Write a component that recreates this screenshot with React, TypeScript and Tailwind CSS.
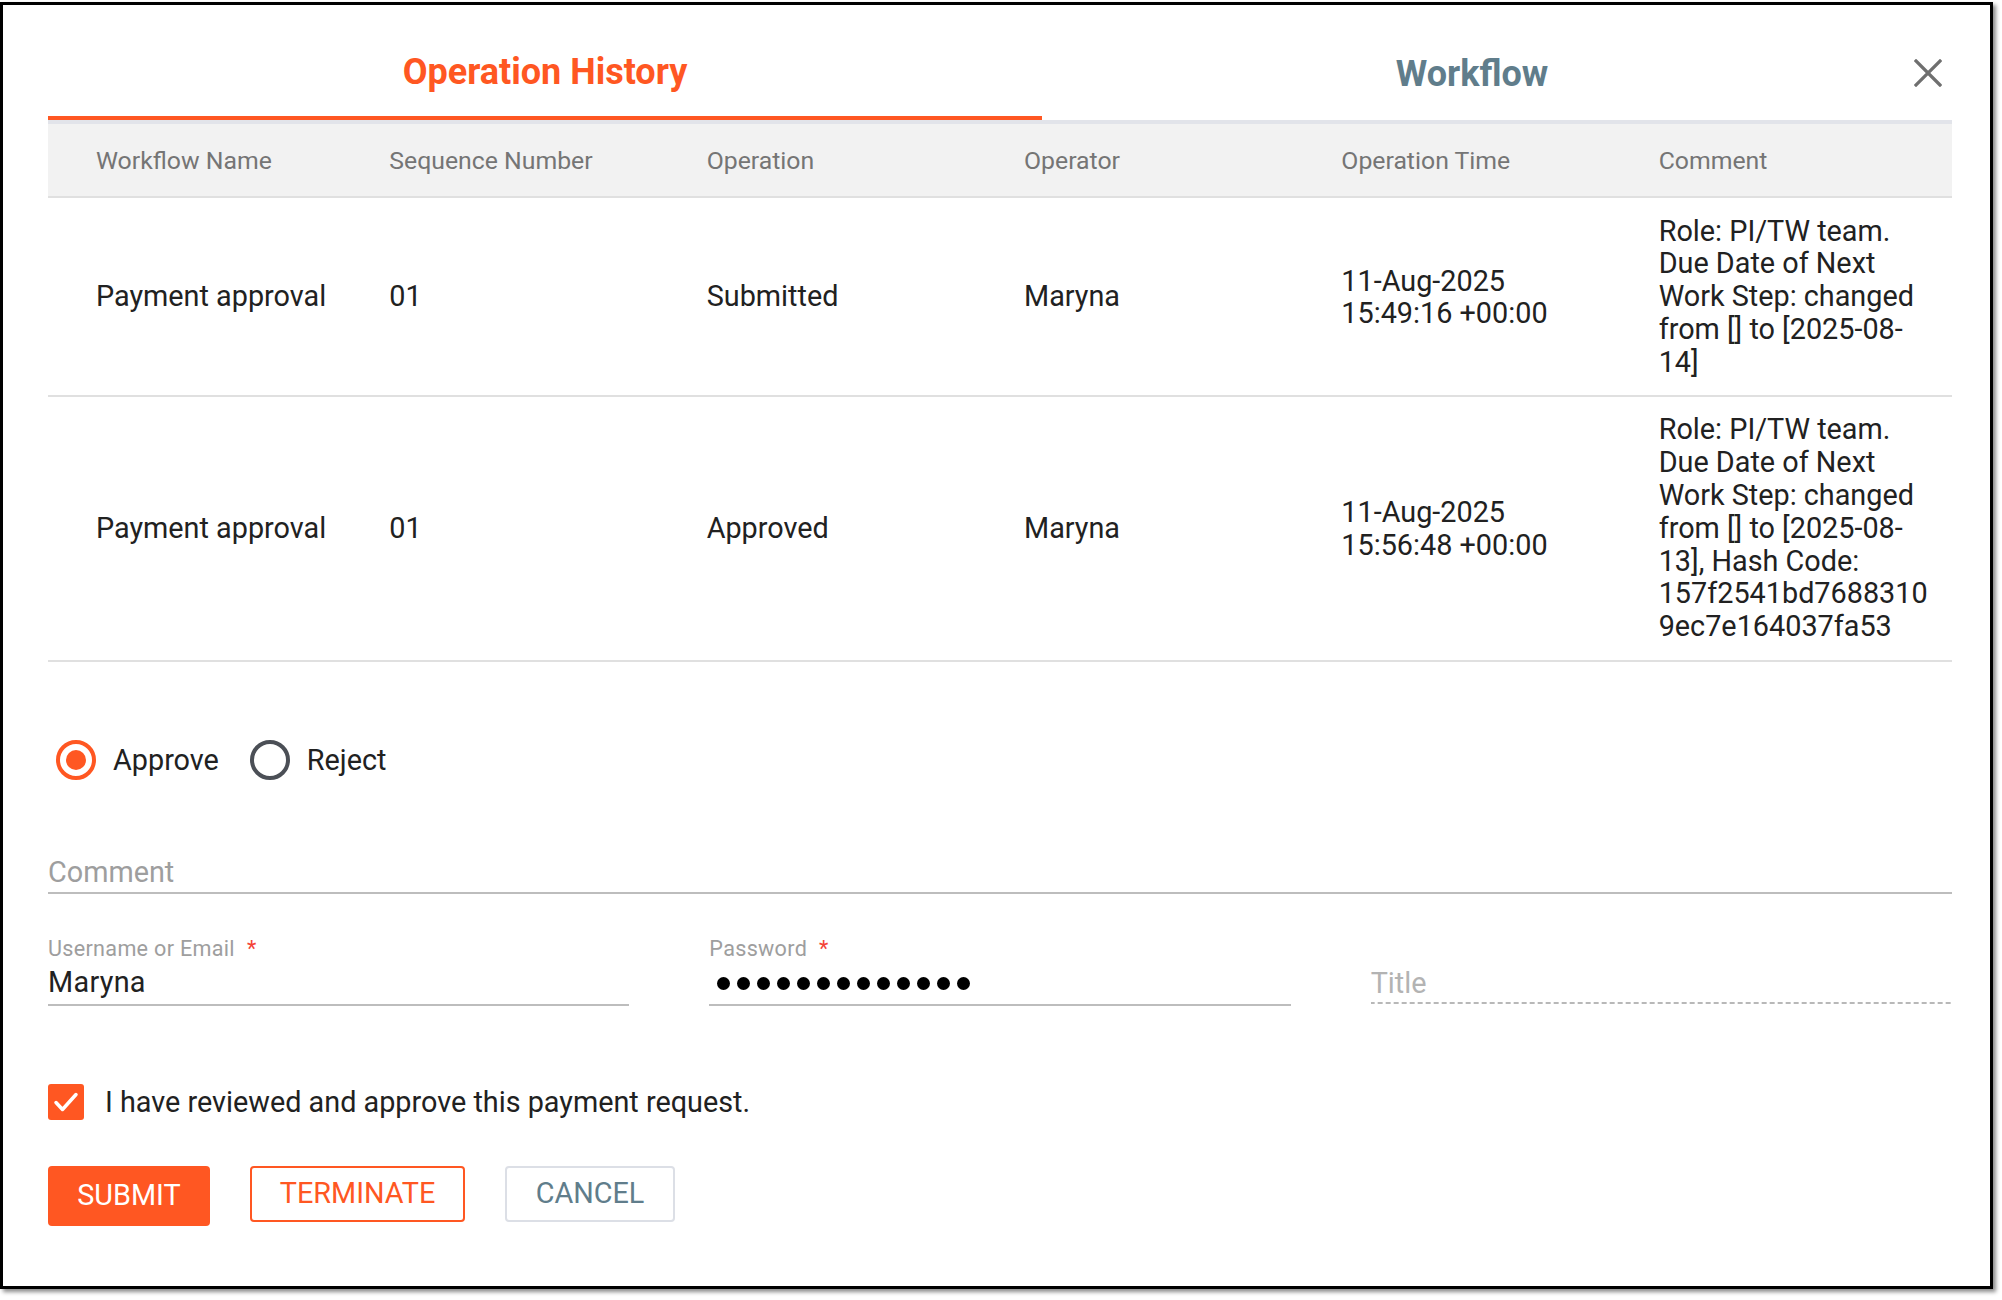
import { useState } from 'react';

const rows = [
  {
    name: 'Payment approval',
    seq: '01',
    op: 'Submitted',
    operator: 'Maryna',
    time: ['11-Aug-2025', '15:49:16 +00:00'],
    comment: 'Role: PI/TW team. Due Date of Next Work Step: changed from [] to [2025-08-14]',
  },
  {
    name: 'Payment approval',
    seq: '01',
    op: 'Approved',
    operator: 'Maryna',
    time: ['11-Aug-2025', '15:56:48 +00:00'],
    comment:
      'Role: PI/TW team. Due Date of Next Work Step: changed from [] to [2025-08-13], Hash Code: 157f2541bd76883109ec7e164037fa53',
  },
];

const headers = ['Workflow Name', 'Sequence Number', 'Operation', 'Operator', 'Operation Time', 'Comment'];

function Radio({ checked, label, onClick }: { checked: boolean; label: string; onClick: () => void }) {
  return (
    <button type="button" onClick={onClick} className="flex items-center">
      <span
        className={
          checked
            ? 'w-[40px] h-[40px] rounded-full border-[4.5px] border-[#ff5722] flex items-center justify-center'
            : 'w-[40px] h-[40px] rounded-full border-[4.5px] border-[#4b4f56] flex items-center justify-center'
        }
      >
        {checked && <span className="w-[20px] h-[20px] rounded-full bg-[#ff5722]" />}
      </span>
      <span className="ml-[17px] text-[28.8px] text-[#212121] leading-[40px]">{label}</span>
    </button>
  );
}

export default function App() {
  const [decision, setDecision] = useState<'approve' | 'reject'>('approve');
  const [agreed, setAgreed] = useState(true);

  return (
    <div className="w-[2002px] h-[1300px] bg-white pt-[2px] font-['Roboto',sans-serif]">
      <div className="w-[1993px] h-[1287px] border-[3px] border-black bg-white shadow-[3px_3px_4px_rgba(0,0,0,0.45)] pl-[45px]">
        <div className="w-[1904px]">
          {/* tabs */}
          <div className="flex h-[119px] border-b-4 border-[#e2e4ea]">
            <div className="w-[994px] h-[115px] pt-[22px] border-b-4 border-[#ff5722] flex items-center justify-center">
              <span className="text-[36px] font-bold text-[#ff5722]">Operation History</span>
            </div>
            <div className="flex-1 h-[115px] pt-[22px] flex items-center justify-center">
              <span className="text-[36px] font-bold text-[#607d8b]">Workflow</span>
            </div>
            <div className="w-[50px] h-[115px] pt-[21px] flex items-center justify-start pl-[12px]">
              <svg width="28" height="28" viewBox="0 0 28 28">
                <path d="M2 2 L26 26 M26 2 L2 26" stroke="#6f6f6f" strokeWidth="3.2" strokeLinecap="square" />
              </svg>
            </div>
          </div>

          {/* table */}
          <div className="grid grid-cols-6 h-[74px] pt-[2px] bg-[#f2f2f2] border-b-2 border-[#e0e0e0] items-center text-[24.8px] text-[#757575]">
            {headers.map((h, i) => (
              <div key={h} className={i === 0 ? 'pl-[48px] pr-6' : 'px-6'}>
                {h}
              </div>
            ))}
          </div>
          {rows.map((r, idx) => (
            <div
              key={idx}
              className="grid grid-cols-6 items-center border-b-2 border-[#e0e0e0] py-[16.5px] text-[28.8px] leading-[32.8px] text-[#212121]"
            >
              <div className="pl-[48px] pr-6">{r.name}</div>
              <div className="px-6">{r.seq}</div>
              <div className="px-6">{r.op}</div>
              <div className="px-6">{r.operator}</div>
              <div className="px-6 pt-[2px]">
                <div>{r.time[0]}</div>
                <div>{r.time[1]}</div>
              </div>
              <div className="pl-6 pr-[18px] break-words">{r.comment}</div>
            </div>
          ))}

          {/* decision */}
          <div className="flex items-center mt-[78px] ml-[8px] h-[40px]">
            <Radio checked={decision === 'approve'} label="Approve" onClick={() => setDecision('approve')} />
            <div className="ml-[31px]">
              <Radio checked={decision === 'reject'} label="Reject" onClick={() => setDecision('reject')} />
            </div>
          </div>

          {/* comment */}
          <div className="mt-[70px] h-[44px] pt-[4px] border-b-2 border-[#bdbdbd] flex items-center text-[28.8px] text-[#9e9e9e]">
            Comment
          </div>

          {/* credentials */}
          <div className="grid grid-cols-3 gap-x-[80px] mt-[44px]">
            <div>
              <div className="h-[24px] flex items-center text-[21.6px] tracking-[0.3px] text-[#9e9e9e]">
                Username or Email
                <span className="ml-[12px] text-[#f44336]">*</span>
              </div>
              <div className="h-[44px] pt-[1px] border-b-2 border-[#bdbdbd] flex items-center text-[28.8px] tracking-[0.3px] text-[#212121]">
                Maryna
              </div>
            </div>
            <div>
              <div className="h-[24px] flex items-center text-[21.6px] tracking-[0.3px] text-[#9e9e9e]">
                Password
                <span className="ml-[12px] text-[#f44336]">*</span>
              </div>
              <div className="h-[44px] pt-[1px] border-b-2 border-[#bdbdbd] flex items-center gap-[7px] pl-[8px]">
                {Array.from({ length: 13 }).map((_, i) => (
                  <span key={i} className="w-[13px] h-[13px] rounded-full bg-black" />
                ))}
              </div>
            </div>
            <div>
              <div className="h-[24px]" />
              <div className="h-[42px] pt-[3px] flex items-center text-[28.8px] text-[#b3b3b3] bg-[linear-gradient(to_right,#b8b8b8_60%,transparent_60%)] bg-[length:8px_2px] bg-repeat-x bg-bottom">
                Title
              </div>
            </div>
          </div>

          {/* confirm */}
          <button type="button" onClick={() => setAgreed(!agreed)} className="flex items-center h-[36px] mt-[78px]">
            <span
              className={
                agreed
                  ? 'w-[36px] h-[36px] rounded-[3px] bg-[#ff5722] flex items-center justify-center'
                  : 'w-[36px] h-[36px] rounded-[3px] border-2 border-[#757575] flex items-center justify-center'
              }
            >
              {agreed && (
                <svg width="36" height="36" viewBox="0 0 36 36">
                  <path d="M8 18.5 L14.5 25.5 L28 10.5" fill="none" stroke="white" strokeWidth="3.5" strokeLinecap="round" strokeLinejoin="round" />
                </svg>
              )}
            </span>
            <span className="ml-[21px] text-[28.8px] leading-[36px] text-[#212121]">
              I have reviewed and approve this payment request.
            </span>
          </button>

          {/* actions */}
          <div className="flex items-start gap-[40px] mt-[46px]">
            <button type="button" className="w-[162px] h-[60px] rounded-[4px] bg-[#ff5722] text-white text-[28.8px] uppercase">
              Submit
            </button>
            <button type="button" className="w-[215px] h-[56px] rounded-[4px] border-2 border-[#ff5722] text-[#ff5722] text-[28.8px] uppercase">
              Terminate
            </button>
            <button type="button" className="w-[170px] h-[56px] rounded-[4px] border-2 border-[#dcdfe6] text-[#607d8b] text-[28.8px] uppercase">
              Cancel
            </button>
          </div>
        </div>
      </div>
    </div>
  );
}
